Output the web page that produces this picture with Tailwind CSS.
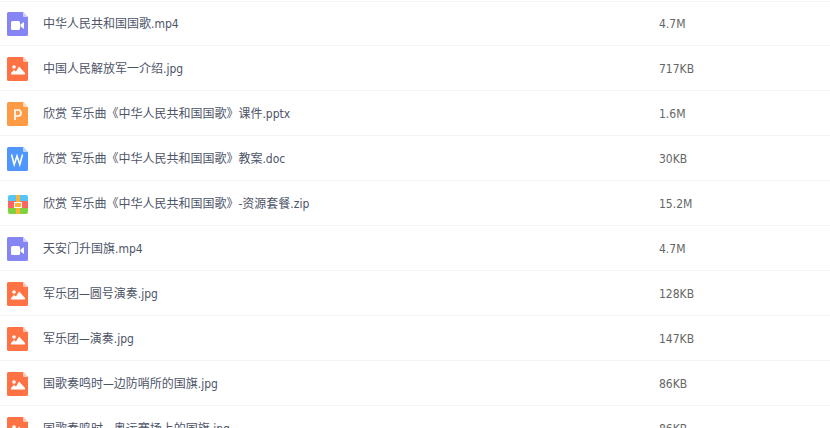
<!DOCTYPE html>
<html lang="en">

<head>
    <meta charset="UTF-8">
    <title>文件列表</title>
    <script src="https://cdn.jsdelivr.net/npm/@tailwindcss/browser@4"></script>
</head>

<body class="bg-white h-[428px] overflow-hidden font-['DejaVu_Sans','Noto_Sans_CJK_SC',sans-serif] font-stretch-condensed text-xs text-[#4d5468]">
    <svg class="hidden">
        <symbol id="sheet" viewBox="0 0 21 24">
            <path d="M1.500 0H16L21 5V22.500A1.500 1.500 0 0 1 19.500 24H1.500A1.500 1.500 0 0 1 0 22.500V1.500A1.500 1.500 0 0 1 1.500 0Z" fill="currentColor" />
            <path d="M16 0L21 5H17A1 1 0 0 1 16 4Z" fill="#fff" fill-opacity=".6" />
        </symbol>
    </svg>

    <ul class="mt-px border-t border-[#f3f4f9]">
        <!-- video -->
        <li class="h-[44px] flex items-center border-b border-[#f3f4f9] pt-px pl-[7px]">
            <svg class="w-[21px] h-6 text-[#8585f3]" viewBox="0 0 21 24"><use href="#sheet" />
                <rect x="4" y="9" width="9" height="9" rx="1.500" fill="#fff" /><path d="M13.500 12.500L17 10V17L13.500 14.500Z" fill="#fff" /></svg>
            <span class="ml-[15px] w-[616px]">中华人民共和国国歌.mp4</span>
            <span class="text-[#666]">4.7M</span>
        </li>
        <li class="h-[45px] flex items-center border-b border-[#f3f4f9] pt-[2px] pl-[7px]">
            <svg class="w-[21px] h-6 text-[#ff7243]" viewBox="0 0 21 24"><use href="#sheet" />
                <circle cx="7" cy="10" r="1.800" fill="#fff" /><path d="M4 17.500V16L7 13L9 14.500L12 9.500L18 16V17.500Z" fill="#fff" /></svg>
            <span class="ml-[15px] w-[616px]">中国人民解放军一介绍.jpg</span>
            <span class="text-[#666]">717KB</span>
        </li>
        <li class="h-[45px] flex items-center border-b border-[#f3f4f9] pt-[2px] pl-[7px]">
            <svg class="w-[21px] h-6 text-[#ff9b44]" viewBox="0 0 21 24"><use href="#sheet" />
                <path d="M8 18V8H11A3 3 0 0 1 11 14H8" fill="none" stroke="#fff" stroke-width="1.700" /></svg>
            <span class="ml-[15px] w-[616px]">欣赏 军乐曲《中华人民共和国国歌》课件.pptx</span>
            <span class="text-[#666]">1.6M</span>
        </li>
        <li class="h-[45px] flex items-center border-b border-[#f3f4f9] pt-[2px] pl-[7px]">
            <svg class="w-[21px] h-6 text-[#4f97ff]" viewBox="0 0 21 24"><use href="#sheet" />
                <path d="M4.500 7.500L7.200 17.500L10 9L12.800 17.500L15.500 7.500" fill="none" stroke="#fff" stroke-width="1.600" /></svg>
            <span class="ml-[15px] w-[616px]">欣赏 军乐曲《中华人民共和国国歌》教案.doc</span>
            <span class="text-[#666]">30KB</span>
        </li>
        <!-- zip -->
        <li class="h-[45px] flex items-center border-b border-[#f3f4f9] pt-[2px] pl-[8px]">
            <div class="relative w-5 h-[19px] rounded-[2px] overflow-hidden flex flex-col">
                <div class="h-[6px] bg-[#52c5fb]"></div>
                <div class="h-[7px] bg-[#fd6464]"></div>
                <div class="h-[6px] bg-[#7fd140]"></div>
                <div class="absolute left-2 top-0 w-1 h-full bg-[#ffb236]"></div>
                <div class="absolute left-[6px] top-[7px] w-2 h-[6px] border border-white bg-[#ffb236]"></div>
            </div>
            <span class="ml-[15px] w-[616px]">欣赏 军乐曲《中华人民共和国国歌》-资源套餐.zip</span>
            <span class="text-[#666]">15.2M</span>
        </li>
        <li class="h-[45px] flex items-center border-b border-[#f3f4f9] pt-[2px] pl-[7px]">
            <svg class="w-[21px] h-6 text-[#8585f3]" viewBox="0 0 21 24"><use href="#sheet" />
                <rect x="4" y="9" width="9" height="9" rx="1.500" fill="#fff" /><path d="M13.500 12.500L17 10V17L13.500 14.500Z" fill="#fff" /></svg>
            <span class="ml-[15px] w-[616px]">天安门升国旗.mp4</span>
            <span class="text-[#666]">4.7M</span>
        </li>
        <li class="h-[45px] flex items-center border-b border-[#f3f4f9] pt-[2px] pl-[7px]">
            <svg class="w-[21px] h-6 text-[#ff7243]" viewBox="0 0 21 24"><use href="#sheet" />
                <circle cx="7" cy="10" r="1.800" fill="#fff" /><path d="M4 17.500V16L7 13L9 14.500L12 9.500L18 16V17.500Z" fill="#fff" /></svg>
            <span class="ml-[15px] w-[616px]">军乐团—圆号演奏.jpg</span>
            <span class="text-[#666]">128KB</span>
        </li>
        <li class="h-[45px] flex items-center border-b border-[#f3f4f9] pt-[2px] pl-[7px]">
            <svg class="w-[21px] h-6 text-[#ff7243]" viewBox="0 0 21 24"><use href="#sheet" />
                <circle cx="7" cy="10" r="1.800" fill="#fff" /><path d="M4 17.500V16L7 13L9 14.500L12 9.500L18 16V17.500Z" fill="#fff" /></svg>
            <span class="ml-[15px] w-[616px]">军乐团—演奏.jpg</span>
            <span class="text-[#666]">147KB</span>
        </li>
        <li class="h-[45px] flex items-center border-b border-[#f3f4f9] pt-[2px] pl-[7px]">
            <svg class="w-[21px] h-6 text-[#ff7243]" viewBox="0 0 21 24"><use href="#sheet" />
                <circle cx="7" cy="10" r="1.800" fill="#fff" /><path d="M4 17.500V16L7 13L9 14.500L12 9.500L18 16V17.500Z" fill="#fff" /></svg>
            <span class="ml-[15px] w-[616px]">国歌奏鸣时—边防哨所的国旗.jpg</span>
            <span class="text-[#666]">86KB</span>
        </li>
        <li class="h-[45px] flex items-center border-b border-[#f3f4f9] pt-[2px] pl-[7px]">
            <svg class="w-[21px] h-6 text-[#ff7243]" viewBox="0 0 21 24"><use href="#sheet" />
                <circle cx="7" cy="10" r="1.800" fill="#fff" /><path d="M4 17.500V16L7 13L9 14.500L12 9.500L18 16V17.500Z" fill="#fff" /></svg>
            <span class="ml-[15px] w-[616px]">国歌奏鸣时—奥运赛场上的国旗.jpg</span>
            <span class="text-[#666]">86KB</span>
        </li>
    </ul>
</body>

</html>
